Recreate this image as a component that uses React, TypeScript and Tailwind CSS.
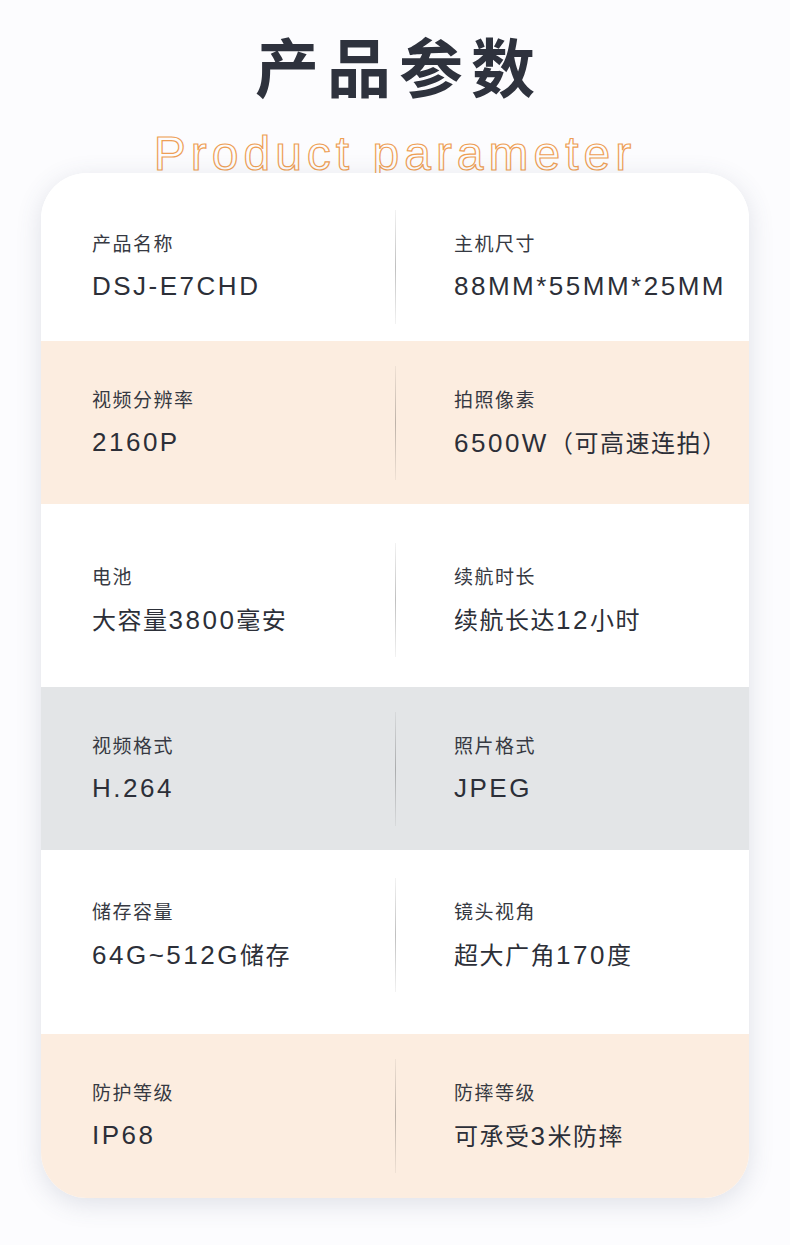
import React from "react";

type Cell = { label: string; value: string };
type Row = { left: Cell; right: Cell; bg: string; h: string; pad: string };

const rows: Row[] = [
  { left: { label: "产品名称", value: "DSJ-E7CHD" }, right: { label: "主机尺寸", value: "88MM*55MM*25MM" }, bg: "bg-white", h: "h-[168px]", pad: "pt-[20px]" },
  { left: { label: "视频分辨率", value: "2160P" }, right: { label: "拍照像素", value: "6500W（可高速连拍）" }, bg: "bg-[#fcede0]", h: "h-[163px]", pad: "" },
  { left: { label: "电池", value: "大容量3800毫安" }, right: { label: "续航时长", value: "续航长达12小时" }, bg: "bg-white", h: "h-[183px]", pad: "pt-[9px]" },
  { left: { label: "视频格式", value: "H.264" }, right: { label: "照片格式", value: "JPEG" }, bg: "bg-[#e3e5e7]", h: "h-[163px]", pad: "" },
  { left: { label: "储存容量", value: "64G~512G储存" }, right: { label: "镜头视角", value: "超大广角170度" }, bg: "bg-white", h: "h-[184px]", pad: "pb-[14px]" },
  { left: { label: "防护等级", value: "IP68" }, right: { label: "防摔等级", value: "可承受3米防摔" }, bg: "bg-[#fcede0]", h: "h-[164px]", pad: "" },
];

function splitRuns(s: string): { cjk: boolean; text: string }[] {
  const out: { cjk: boolean; text: string }[] = [];
  for (const ch of s) {
    const cjk = /[\u3000-\u9fff\uff00-\uffef]/.test(ch);
    const last = out[out.length - 1];
    if (last && last.cjk === cjk) last.text += ch;
    else out.push({ cjk, text: ch });
  }
  return out;
}

function Value({ text }: { text: string }) {
  return (
    <div className="mt-[14px] h-[34px] leading-[34px] text-[#2c2f38] whitespace-nowrap">
      {splitRuns(text).map((r, i) =>
        r.cjk ? (
          <span key={i} className="text-[24px] tracking-[1.5px]" style={{ fontFamily: '"Noto Sans CJK SC", sans-serif' }}>
            {r.text}
          </span>
        ) : (
          <span key={i} className="text-[26px] tracking-[2.5px]" style={{ fontFamily: '"Liberation Sans", Arial, sans-serif' }}>
            {r.text}
          </span>
        )
      )}
    </div>
  );
}

function CellView({ c }: { c: Cell }) {
  return (
    <div className="flex flex-col">
      <div className="text-[19px] leading-[24px] tracking-[1.5px] text-[#363942]">{c.label}</div>
      <Value text={c.value} />
    </div>
  );
}

export default function App() {
  return (
    <div
      className="w-[790px] h-[1245px] bg-[#fcfcfe] overflow-hidden"
      style={{ fontFamily: '"Noto Sans CJK SC", "Noto Sans", sans-serif' }}
    >
      <div className="pt-[24px] flex justify-center">
        <h1 className="text-[64px] leading-[80px] font-bold tracking-[8px] pl-[8px] text-[#2e323d]">产品参数</h1>
      </div>
      <div className="mt-[22px] flex justify-center h-[56px]">
        <div
          className="text-[48px] leading-[56px] tracking-[5px] text-transparent [-webkit-text-stroke:1.2px_#ee9f55]"
          style={{ fontFamily: '"Liberation Sans", Arial, sans-serif' }}
        >
          Product parameter
        </div>
      </div>
      <div className="relative z-10 -mt-[9px] mx-[41px] rounded-[46px] overflow-hidden shadow-[0_6px_26px_rgba(70,80,110,0.16)] bg-white">
        {rows.map((r, i) => (
          <div key={i} className={`flex items-center ${r.bg} ${r.h} ${r.pad}`}>
            <div className="w-[354px] pl-[51px]">
              <CellView c={r.left} />
            </div>
            <div className="w-px h-[114px] bg-gradient-to-b from-black/5 via-black/25 to-black/5" />
            <div className="flex-1 pl-[58px]">
              <CellView c={r.right} />
            </div>
          </div>
        ))}
      </div>
    </div>
  );
}
